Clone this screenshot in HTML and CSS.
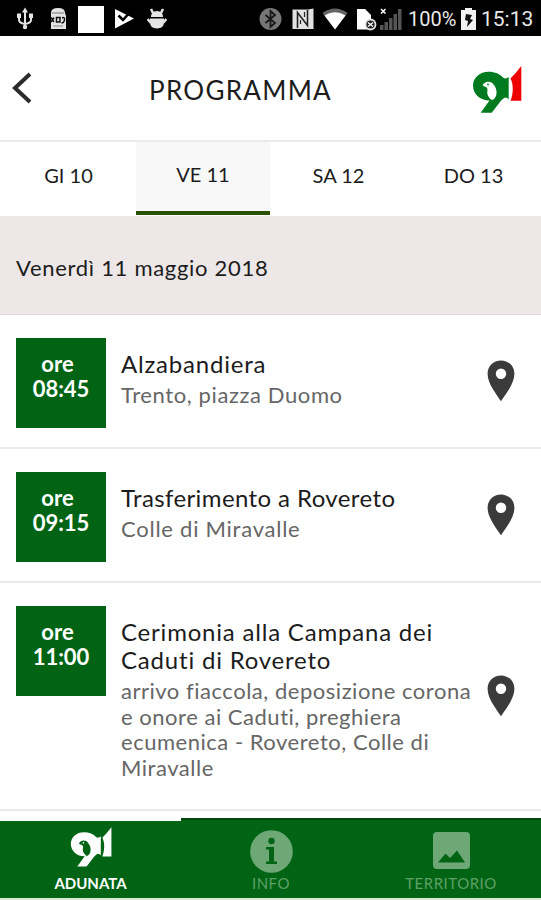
FILE: index.html
```
<!DOCTYPE html>
<html lang="it">
<head>
    <meta charset="UTF-8">
    <meta name="viewport" content="width=device-width, initial-scale=1.0">
    <title>Programma</title>
    <link rel="stylesheet" href="styles.css">
</head>
<body>
    <!-- shared shapes -->
    <svg class="defs" width="0" height="0">
        <defs>
            <symbol id="pin" viewBox="0 0 28 42">
                <path fill-rule="evenodd" d="M14 0.5C6.3 0.5 0.6 6.4 0.6 13.8C0.6 23 8 32.5 14 41.3C20 32.5 27.4 23 27.4 13.8C27.4 6.4 21.7 0.5 14 0.5ZM14 8.6A5.2 5.2 0 1 1 14 19A5.2 5.2 0 1 1 14 8.6Z"/>
            </symbol>
            <symbol id="mark" viewBox="0 0 50 48">
                <path class="mark-left" fill-rule="evenodd" d="M1 19.5C1 11.5 8 5.7 16.5 5.7C23 5.7 28 8 31 11.5C33 13 35 12.5 36.7 10.7V33.3C35.5 32 34.5 31.7 33 31.5C31 32.5 29 34.5 28 36L19.7 46.7H8.7L17.5 34.5C8 34.5 1 28 1 19.5ZM10.5 19L12.5 17C15 15 20 15.5 21.5 18.5C24 21 25.5 26 24 30C23 32.5 21 34 20 34C16.5 32 14.5 28 15.5 24C15.5 22 14.5 20.5 12 20.5Z"/>
                <circle class="mark-left" cx="16" cy="18.500" r="0.900"/>
                <path class="mark-right" d="M49.300 0V34.700H38.500C41.500 27.500 41.500 18 38.500 12.500Q44 7 49.300 0Z"/>
            </symbol>
        </defs>
    </svg>

    <div class="status-bar">
        <div class="status-left">
            <svg width="16" height="24" viewBox="0 0 16 24" fill="#e4e4e4" stroke="#e4e4e4">
                <path d="M8 5V20M2 9V13Q2 16 8 17Q14 16 14 13V9" fill="none" stroke-width="2"/>
                <path d="M8 0.500L11 5.500H5Z" stroke="none"/>
                <path d="M0 6.500H4V11H0ZM12 6.500H16V11H12Z" stroke="none"/>
                <circle cx="8" cy="20" r="2.200" stroke="none"/>
            </svg>
            <svg width="18" height="24" viewBox="0 0 18 24">
                <path d="M2 6Q2 1 9 1Q16 1 16 6L17 9V22H2V9Z" fill="#e4e4e4"/>
                <path d="M3 6H15" stroke="#777"/>
                <path d="M2 10.500L5 15M5 10.500L2 15M7.500 10.500H11V15H7.500ZM13 11Q16 9.500 15.500 13Q15 16 12.500 16" stroke="#111" stroke-width="1.500" fill="none"/>
                <path d="M4 19H14" stroke="#888"/>
            </svg>
            <div class="white-box"></div>
            <svg width="20" height="22" viewBox="0 0 20 22">
                <path d="M1 1L20 10.500L1 20.500Z" fill="#fff"/>
                <path d="M4.500 7.500L9 12L17 3" fill="none" stroke="#000" stroke-width="2.500"/>
            </svg>
            <svg width="20" height="22" viewBox="0 0 20 22">
                <path d="M4 9Q4 3 10 3Q16 3 16 9ZM3 10.500H17V14Q17 20.500 10 20.500Q3 20.500 3 14Z" fill="#e4e4e4"/>
                <path d="M6 5L4 1M14 5L16 1M4 15L0.500 11M16 15L19.500 11" stroke="#e4e4e4" stroke-width="2.500"/>
            </svg>
        </div>
        <div class="status-right">
            <svg class="bt" width="23" height="24" viewBox="0 0 23 24">
                <circle cx="11.500" cy="12" r="11" fill="#777"/>
                <path d="M6.500 8L16 16L11.500 20V4L16 8L6.500 16" fill="none" stroke="#181818" stroke-width="1.800"/>
            </svg>
            <svg class="nfc" width="22" height="22" viewBox="0 0 22 22">
                <path d="M0.500 1.500H16L21.500 0.500V21H0.500Z" fill="#e2e2e2"/>
                <path d="M5.500 20V4.500L15.500 17.500V2" fill="none" stroke="#222" stroke-width="1.600"/>
                <path d="M8.500 16V12M12.500 9V4" stroke="#222" stroke-width="1.200"/>
            </svg>
            <svg class="wifi" width="26" height="22" viewBox="0 0 26 22">
                <path d="M0.500 5Q13 -4 25.500 5L13 21.500Z" fill="#666"/>
                <path d="M2.500 7.500Q13 1 23.500 7.500L13 21.500Z" fill="#fff"/>
            </svg>
            <svg class="sim" width="21" height="23" viewBox="0 0 21 23">
                <path d="M1 1H9L15 7V21.500H1Z" fill="#fff"/>
                <circle cx="14.500" cy="16.500" r="5" fill="#222" stroke="#e4e4e4" stroke-width="1.800"/>
                <path d="M12 14.500L17 18.500M17 14.500L12 18.500" stroke="#fff" stroke-width="1.300"/>
            </svg>
            <svg class="signal" width="22" height="24" viewBox="0 0 22 24">
                <path d="M0 18H3.500V23H0ZM4.500 15H8V23H4.500ZM9 11H12.500V23H9ZM13.500 7H17V23H13.500ZM18 2H21.500V23H18Z" fill="#555"/>
                <path d="M1 2L5.500 6.500M5.500 2L1 6.500" stroke="#fff" stroke-width="1.500"/>
            </svg>
            <span class="battery-text">100%</span>
            <svg class="battery" width="15" height="22" viewBox="0 0 15 22">
                <path d="M4 0H11V2H15V22H0V2H4Z" fill="#f2f2f2"/>
                <path d="M5 6L11 7L9 11L12 12L6 19L7 13L4 12Z" fill="#111"/>
            </svg>
            <span class="clock">15:13</span>
        </div>
    </div>

    <header class="header">
        <svg class="back" width="20" height="32" viewBox="0 0 20 32">
            <path d="M18 2L3 16L18 30" fill="none" stroke="#2b2b2b" stroke-width="4"/>
        </svg>
        <h1>PROGRAMMA</h1>
        <svg class="logo" width="50" height="48"><use href="#mark"/></svg>
    </header>

    <nav class="tabs">
        <a class="tab">GI 10</a>
        <a class="tab active">VE 11</a>
        <a class="tab">SA 12</a>
        <a class="tab">DO 13</a>
    </nav>

    <div class="date-bar">Venerdì 11 maggio 2018</div>

    <main class="events">
        <div class="event">
            <div class="time"><span class="hour-label">ore</span><span>08:45</span></div>
            <div class="info">
                <h2>Alzabandiera</h2>
                <p>Trento, piazza Duomo</p>
            </div>
            <svg class="pin" width="28" height="42"><use href="#pin"/></svg>
        </div>
        <div class="event transfer">
            <div class="time"><span class="hour-label">ore</span><span>09:15</span></div>
            <div class="info">
                <h2>Trasferimento a Rovereto</h2>
                <p>Colle di Miravalle</p>
            </div>
            <svg class="pin" width="28" height="42"><use href="#pin"/></svg>
        </div>
        <div class="event ceremony">
            <div class="time"><span class="hour-label">ore</span><span>11:00</span></div>
            <div class="info">
                <h2>Cerimonia alla Campana dei<br>Caduti di Rovereto</h2>
                <p>arrivo fiaccola, deposizione corona<br>e onore ai Caduti, preghiera<br>ecumenica - Rovereto, Colle di<br>Miravalle</p>
            </div>
            <svg class="pin" width="28" height="42"><use href="#pin"/></svg>
        </div>
    </main>

    <footer class="bottom-nav">
        <a class="nav-item current">
            <svg class="nav-logo" width="42" height="41"><use href="#mark"/></svg>
            <span>ADUNATA</span>
        </a>
        <a class="nav-item">
            <svg width="43" height="43" viewBox="0 0 43 43">
                <circle cx="21.500" cy="21.500" r="21.300" fill="#6fa877"/>
                <circle cx="21.500" cy="11" r="3.200" fill="#006414"/>
                <path d="M16 17H24V31.500H27V34H16V31.500H19V19.500H16Z" fill="#006414"/>
            </svg>
            <span>INFO</span>
        </a>
        <a class="nav-item">
            <svg width="43" height="43" viewBox="0 0 43 43">
                <rect x="3" y="2" width="37" height="37" rx="4" fill="#6fa877"/>
                <path d="M8 32.500L15.500 23.500L20 28L27 20.500L35 32.500Z" fill="#006414"/>
            </svg>
            <span>TERRITORIO</span>
        </a>
    </footer>
</body>
</html>
```
FILE: styles.css
```
* {
    box-sizing: border-box;
}
body {
    font-family: Lato, 'Liberation Sans', sans-serif;
    background-color: #fff;
    margin: 0;
    width: 541px;
    height: 900px;
    overflow: hidden;
    display: flex;
    flex-direction: column;
    color: #1c1c1c;
}
h1, h2, p {
    margin: 0;
    font-weight: normal;
}
svg {
    display: block;
    flex: none;
}
.defs {
    position: absolute;
}

/* Android status bar */
.status-bar {
    height: 36px;
    flex: none;
    background-color: #000;
    display: flex;
    justify-content: space-between;
    align-items: center;
    padding: 2px 8px 0 17px;
    color: #e8e8e8;
    font-family: Roboto, sans-serif;
}
.status-left {
    display: flex;
    align-items: center;
    gap: 15px;
}
.status-left svg:first-child {
    margin-right: 1px;
}
.white-box {
    width: 26px;
    height: 27px;
    margin: 0 -5px 0 -4px;
    background-color: #fff;
}
.status-left svg:nth-child(4) {
    margin-right: -2px;
}
.status-right {
    display: flex;
    align-items: center;
}
.nfc {
    margin-left: 10px;
}
.wifi {
    margin-left: 8px;
}
.sim {
    margin-left: 8px;
}
.signal {
    margin-left: 3px;
}
.battery-text {
    font-size: 20px;
    margin-left: 6px;
    width: 47px;
}
.battery {
    margin: 0 5px 0 6px;
}
.clock {
    font-size: 21px;
    width: 52px;
}

/* Title bar */
.header {
    height: 106px;
    flex: none;
    display: flex;
    align-items: center;
    padding: 0 19px 0 12px;
    border-bottom: 2px solid #ebebeb;
}
.header h1 {
    font-size: 26px;
    letter-spacing: 1.3px;
    margin-left: 117px;
    margin-top: 4px;
}
.mark-left {
    fill: #007a1e;
}
.mark-right {
    fill: #ee0000;
}
.logo {
    margin-top: 3px;
    margin-left: auto;
}

/* Days */
.tabs {
    height: 74px;
    flex: none;
    display: grid;
    grid-template-columns: 137px 134px 135px 135px;
}
.tab {
    display: flex;
    align-items: center;
    justify-content: center;
    padding-bottom: 8px;
    font-size: 20px;
}
.tab.active {
    background-color: #f8f8f8;
    border-bottom: 4px solid #2a5200;
    height: 73px;
    margin: 0 1px 0 -1px;
    padding-bottom: 6px;
}
.date-bar {
    height: 99px;
    flex: none;
    padding: 4px 16px 0;
    display: flex;
    align-items: center;
    background-color: #ede8e7;
    border-bottom: 1px solid #dedada;
    font-size: 22px;
    letter-spacing: 0.7px;
}

/* Event list */
.event {
    display: flex;
    height: 134px;
    padding: 23px 26px 0 16px;
    border-bottom: 2px solid #e9e9e9;
}
.event:last-child {
    height: 228px;
}
.time {
    width: 90px;
    height: 90px;
    flex: none;
    background-color: #006414;
    color: #fff;
    display: flex;
    flex-direction: column;
    align-items: center;
    padding-top: 13px;
    font-size: 22px;
    line-height: 25px;
    font-weight: bold;
}
.hour-label {
    margin-right: 7px;
}
.info {
    flex: 1;
    min-width: 0;
    padding: 12px 0 0 15px;
    white-space: nowrap;
}
.info h2 {
    font-size: 24px;
    line-height: 28px;
    letter-spacing: 0.8px;
}
.info p {
    font-size: 22px;
    line-height: 25.5px;
    margin-top: 4px;
    letter-spacing: 0.6px;
    color: #666;
}
.transfer h2 {
    letter-spacing: 0.4px;
}
.transfer p {
    letter-spacing: 0.75px;
}
.ceremony p {
    letter-spacing: 0.52px;
}
.pin {
    align-self: center;
    margin-top: -23px;
    fill: #3b3b3b;
}

/* Bottom navigation */
.bottom-nav {
    position: absolute;
    top: 818px;
    left: 0;
    width: 541px;
    height: 82px;
    display: grid;
    grid-template-columns: 181px 180px 180px;
    background-color: #006414;
    border-bottom: 2px solid #dbe9d8;
}
.nav-item {
    display: flex;
    flex-direction: column;
    align-items: center;
    padding-top: 10px;
    border-top: 2px solid #00480c;
    color: #5fa068;
    font-size: 15px;
    line-height: 20px;
    letter-spacing: 0.5px;
}
.nav-item.current {
    border-top: 3px solid #fff;
    padding-top: 6px;
    color: #fff;
    font-weight: bold;
    letter-spacing: 0;
}
.nav-item.current span {
    margin-top: 5px;
}
.nav-logo {
    filter: brightness(0) invert(1);
}
```
